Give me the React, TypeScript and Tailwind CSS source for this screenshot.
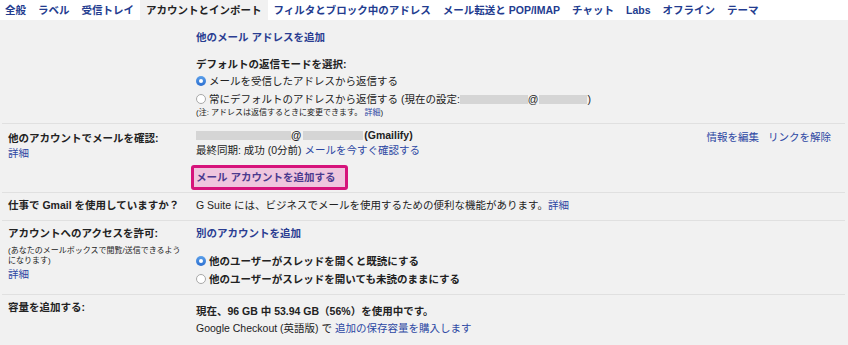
import React from "react";

const LINK = "text-[#2c47a3]";
const BLINK = "text-[#2a3d91] font-bold";

function Radio({ checked }: { checked?: boolean }) {
  return checked ? (
    <span className="inline-flex w-[10px] h-[10px] rounded-full bg-gradient-to-b from-[#5ca0ea] to-[#2c6fd0] items-center justify-center shrink-0 mr-[3px]">
      <span className="w-[4px] h-[4px] rounded-full bg-white" />
    </span>
  ) : (
    <span className="inline-block w-[10px] h-[10px] rounded-full bg-white border border-[#a8a8a8] shrink-0 mr-[3px]" />
  );
}

function Gray({ w }: { w: string }) {
  return <span className={`inline-block h-[9px] bg-[#d5d5d5] ${w}`} />;
}

const tabs = [
  "全般",
  "ラベル",
  "受信トレイ",
  "アカウントとインポート",
  "フィルタとブロック中のアドレス",
  "メール転送と POP/IMAP",
  "チャット",
  "Labs",
  "オフライン",
  "テーマ",
];

export default function App() {
  return (
    <div className="w-[848px] h-[345px] overflow-hidden bg-[#f1f1f1] font-['Liberation_Sans','Noto_Sans_CJK_JP',sans-serif] text-[10.5px] leading-[15px] text-[#222]">
      {/* Tabs */}
      <div className="h-[20px] bg-white flex -ml-px">
        {tabs.map((t, i) => (
          <div
            key={t}
            className={
              i === 3
                ? "px-[6px] flex items-center font-bold bg-[#f1f1f1] text-[#222] whitespace-pre"
                : "px-[6px] flex items-center font-bold text-[#233c8f] whitespace-pre"
            }
          >
            {t}
          </div>
        ))}
      </div>

      {/* Row 1 */}
      <div className="ml-[2px] mr-[3px] border-b border-[#e0e0e0] flex pl-[6px] pt-[10px] pb-[6px]">
        <div className="w-[188px] shrink-0" />
        <div className="flex flex-col">
          <div className={BLINK}>他のメール アドレスを追加</div>
          <div className="mt-[12px] font-bold">デフォルトの返信モードを選択:</div>
          <div className="h-[18px] flex items-center">
            <Radio checked />
            <span>メールを受信したアドレスから返信する</span>
          </div>
          <div className="h-[18px] flex items-center whitespace-pre">
            <Radio />
            <span>常にデフォルトのアドレスから返信する (現在の設定:</span>
            <Gray w="w-[68px]" />
            <span>@</span>
            <Gray w="w-[48px]" />
            <span className="ml-[1px]">)</span>
          </div>
          <div className="text-[8px] leading-[9px] whitespace-pre">
            (注: アドレスは返信するときに変更できます。 <span className={LINK}>詳細</span>)
          </div>
        </div>
      </div>

      {/* Row 2 */}
      <div className="ml-[2px] mr-[3px] border-b border-[#e0e0e0] flex pl-[6px] pt-[4px] pb-[2px]">
        <div className="w-[188px] shrink-0 pt-[3px] flex flex-col">
          <div className="font-bold">他のアカウントでメールを確認:</div>
          <div className={LINK}>詳細</div>
        </div>
        <div className="flex-1 flex flex-col items-start">
          <div className="flex items-center whitespace-pre font-bold">
            <Gray w="w-[95px]" />
            <span>@</span>
            <Gray w="w-[60px] ml-[2px]" />
            <span className="ml-[1px]">(Gmailify)</span>
          </div>
          <div className="whitespace-pre">
            最終同期: 成功 (0分前) <span className={LINK}>メールを今すぐ確認する</span>
          </div>
          <div className="mt-[7px] -ml-[5px] w-[157px] h-[25px] border-[3px] border-[#d6137b] rounded-[3px] bg-[#efc5de] flex items-center pl-[2px]">
            <span className="font-bold text-[#4b3a8e] whitespace-pre">メール アカウントを追加する</span>
          </div>
        </div>
        <div className="pt-[2px] pr-[14px] flex gap-[9px]">
          <span className={LINK}>情報を編集</span>
          <span className={LINK}>リンクを解除</span>
        </div>
      </div>

      {/* Row 3 */}
      <div className="ml-[2px] mr-[3px] border-b border-[#e0e0e0] flex pl-[6px] pt-[5px] pb-[7px]">
        <div className="w-[188px] shrink-0 font-bold whitespace-pre">仕事で Gmail を使用していますか？</div>
        <div className="whitespace-pre">
          G Suite には、ビジネスでメールを使用するための便利な機能があります。<span className={LINK}>詳細</span>
        </div>
      </div>

      {/* Row 4 */}
      <div className="ml-[2px] mr-[3px] border-b border-[#e0e0e0] flex pl-[6px] pt-[5px] pb-[6px]">
        <div className="w-[188px] shrink-0 flex flex-col">
          <div className="font-bold">アカウントへのアクセスを許可:</div>
          <div className="mt-[5px] text-[8px] leading-[10px]">
            (あなたのメールボックスで閲覧/送信できるよう
            <br />
            になります)
          </div>
          <div className={`mt-[1px] ${LINK}`}>詳細</div>
        </div>
        <div className="flex flex-col">
          <div className={BLINK}>別のアカウントを追加</div>
          <div className="mt-[11px] h-[18px] flex items-center font-bold">
            <Radio checked />
            <span>他のユーザーがスレッドを開くと既読にする</span>
          </div>
          <div className="h-[18px] flex items-center font-bold">
            <Radio />
            <span>他のユーザーがスレッドを開いても未読のままにする</span>
          </div>
        </div>
      </div>

      {/* Row 5 */}
      <div className="ml-[2px] mr-[3px] flex pl-[6px] pt-[5px]">
        <div className="w-[188px] shrink-0 font-bold">容量を追加する:</div>
        <div className="flex flex-col pt-[4px]">
          <div className="font-bold whitespace-pre">現在、96 GB 中 53.94 GB（56%）を使用中です。</div>
          <div className="mt-[2px] whitespace-pre">
            Google Checkout (英語版) で <span className={LINK}>追加の保存容量を購入します</span>
          </div>
        </div>
      </div>
    </div>
  );
}
